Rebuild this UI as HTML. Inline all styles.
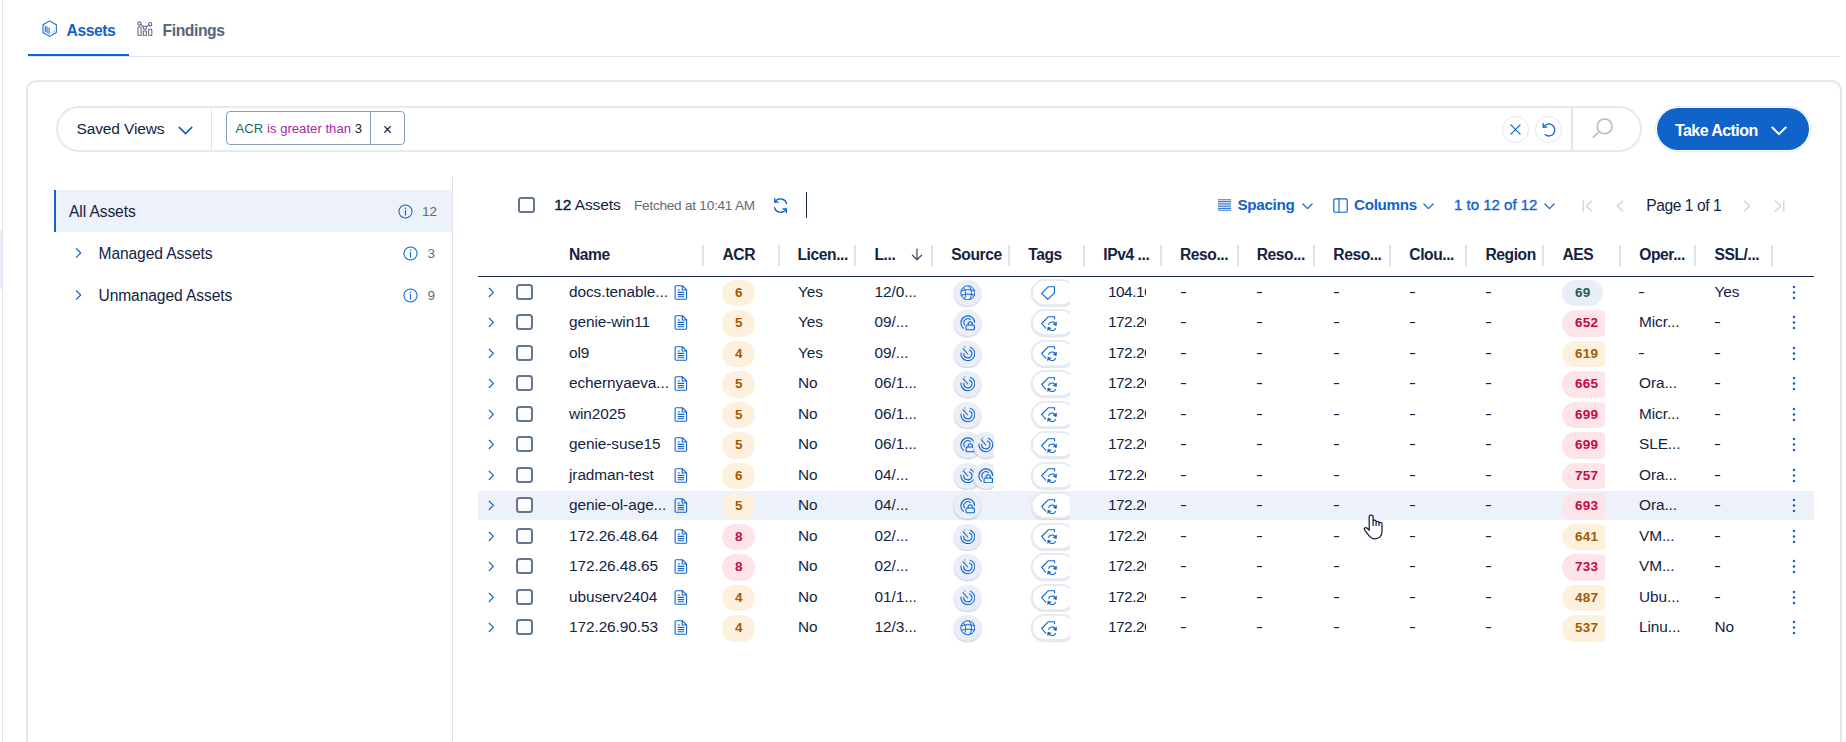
<!DOCTYPE html>
<html lang="en"><head><meta charset="utf-8"><title>Assets</title>
<style>
*{box-sizing:border-box;margin:0;padding:0}
html,body{width:1846px;height:742px;overflow:hidden;background:#fff}
body{font-family:"Liberation Sans",sans-serif;color:#14233f;font-size:15.2px;position:relative}
.abs{position:absolute}
svg{display:block}
.leftline{position:absolute;left:2px;top:0;width:1px;height:742px;background:#dfe4ec}
.leftblock{position:absolute;left:0;top:230px;width:2px;height:59px;background:#e9eef7}
.tabs{position:absolute;left:28px;top:0;width:1812px;height:57px;border-bottom:1.5px solid #dfe5ee}
.tab{position:absolute;top:0;height:56px;font-weight:700;font-size:15.7px;line-height:20px}
.tab .t{position:absolute;top:20.8px;white-space:nowrap}
.tabline{position:absolute;left:28px;top:53.8px;width:101px;height:2.3px;background:#1063c9}
.card{position:absolute;left:26px;top:80px;width:1816px;height:700px;border:2px solid #e3e8ef;border-radius:10.5px;background:#fff}
.fbar{position:absolute;left:55.6px;top:106px;width:1586px;height:46px;border:2px solid #e5e9f0;border-radius:23px;background:#fff}
.fdiv1{position:absolute;left:210.5px;top:108px;width:1.5px;height:42px;background:#dfe5ee}
.fdiv2{position:absolute;left:1571px;top:108px;width:1.5px;height:42px;background:#dfe5ee}
.saved{position:absolute;left:76.5px;top:119px;font-size:15.5px;line-height:19px;white-space:nowrap;letter-spacing:-.12px}
.chip{position:absolute;left:226px;top:111px;width:179px;height:33.7px;border:1.3px solid #8a9fbe;border-radius:4px;background:#fff}
.chip .txt{position:absolute;left:8.6px;top:8.6px;font-size:13.1px;line-height:16px;white-space:nowrap;letter-spacing:.02px}
.chip .dv{position:absolute;left:143px;top:0;width:1px;height:100%;background:#8a9fbe}
.chip .x{position:absolute;left:155.8px;top:8.8px;font-size:16px;line-height:18px;color:#14233f}
.cbtn{position:absolute;width:26.4px;height:26.4px;border-radius:50%;border:1px solid #e3e8ef;background:#fff}
.take{position:absolute;left:1657px;top:108px;width:152px;height:42px;border-radius:21px;background:#1063c9;color:#fff;font-weight:700;font-size:16px;box-shadow:0 0 0 1px #fff,0 0 0 2px #e6ebf4}
.take .t{position:absolute;left:18px;top:12.7px;line-height:19px;white-space:nowrap;letter-spacing:-0.57px}
.vdiv{position:absolute;left:452px;top:176px;width:1px;height:566px;background:#dfe4ec}
.sel{position:absolute;left:54px;top:190px;width:398px;height:42px;background:#edf1f9;border-left:2.5px solid #1063c9}
.li{position:absolute;white-space:nowrap;line-height:19px;font-size:15.6px;letter-spacing:-.1px}
.cnt{position:absolute;font-size:13.5px;color:#5b6b80;line-height:16px}
.inf{position:absolute;width:15px;height:15px}
.tb{position:absolute;white-space:nowrap;line-height:19px}
.bl{color:#1063c9}
.cbx{position:absolute;width:17px;height:16px;border:2px solid #63768f;border-radius:3px;background:#fff}
.table{position:absolute;left:478px;top:0;width:1336px}
.hline{position:absolute;left:0;top:275.5px;width:1336px;height:1.6px;background:#1c2b4a}
.th{position:absolute;top:245px;font-weight:700;font-size:15.6px;line-height:19px;white-space:nowrap;color:#14233f;letter-spacing:-.42px}
.sep{position:absolute;top:245.2px;width:2px;height:20.7px;background:#dde3ec}
.row{position:absolute;left:0;width:1336px;height:30.5px}
.row.hl::before{content:'';position:absolute;left:0;top:.9px;width:100%;height:28.6px;background:#edf1f9}
.row .chv{position:absolute;left:9.7px;top:10.2px;width:6.6px;height:10.8px}
.row .cb{position:absolute;left:38px;top:7px;width:17px;height:16px;border:2px solid #63768f;border-radius:3.5px;background:#fcfdff}
.c{position:absolute;top:5px;line-height:19px;white-space:nowrap;font-size:15.4px;letter-spacing:-.08px}
.nm{left:91px}
.d{transform:scaleX(1.35);transform-origin:0 50%;margin-left:-.7px}
.row .doc{position:absolute;left:195.6px;top:8.2px;width:14px;height:15px}
.bdg{position:absolute;top:2.9px;height:26.4px;border-radius:13.2px;text-align:center;font-weight:700;font-size:13.5px;letter-spacing:.2px;line-height:26.2px}
.bdg.o{background:#fdf1dd;color:#a35a08}
.bdg.r{background:#fde4e8;color:#c40a47}
.bdg.b{background:#e9eef7;color:#1d5c58}
.srcw{position:absolute;left:0;top:0;width:515.7px;height:100%;overflow:hidden}
.src{position:absolute;top:3.2px;width:26.6px;height:25.6px;border-radius:50%;background:#e9eef7;box-shadow:0 1px 2px rgba(60,80,120,.32)}
.src svg{position:absolute;left:5.6px;top:4.8px;width:15.6px;height:15.6px}
.tagw{position:absolute;left:552px;top:0;width:40px;height:100%;overflow:hidden}
.tagp{position:absolute;left:.6px;top:2px;width:44.4px;height:27.2px;border-radius:13.6px;border:2px solid #e6eaf1;background:#fff;box-shadow:0 1px 1.5px rgba(60,80,120,.18)}
.tagp svg{position:absolute;left:8.8px;top:4.5px;width:16.4px;height:15.2px}
.tagp svg.t1{left:8.8px;top:5.5px;width:14.2px;height:14.2px}
.ip{left:630px;width:38px;overflow:hidden;letter-spacing:-.5px}
.aesw{position:absolute;left:1084px;top:0;width:43.3px;height:100%;overflow:hidden}
.aes{left:0.3px;min-width:40.5px;padding:0 12.7px;text-align:left}
.row .keb{position:absolute;left:1314px;top:8px;width:4px;height:15px}
</style></head><body>
<div class="leftline"></div><div class="leftblock"></div>
<div class="tabs"></div><div class="tabline"></div>
<div class="tab" style="left:28px;color:#1063c9">
 <svg class="abs" style="left:13.6px;top:19.6px" width="15.3" height="17.3" viewBox="0 0 16 17.6" preserveAspectRatio="none"><g fill="none" stroke="#1063c9" stroke-width="1.05" stroke-linejoin="round" stroke-linecap="round"><path d="M8 .9 L15 4.9 V12.7 L8 16.7 L1 12.7 V4.9 Z"/><path d="M3.4 6.2 V11.6 M5.3 6.8 V12.8 M7.4 7.8 V14"/><path d="M10.6 12.6 L13.4 11" stroke-width=".8" opacity=".6"/></g></svg>
 <span class="t" style="left:38.6px;letter-spacing:-.45px">Assets</span></div>
<div class="tab" style="left:129px;color:#55657c">
 <svg class="abs" style="left:8.4px;top:20.8px" width="15.8" height="15.6" viewBox="0 0 16 16"><g fill="none" stroke="#55657c" stroke-width="1.05"><circle cx="2.5" cy="2.6" r="1.7"/><circle cx="7.9" cy="6.8" r="1.7"/><circle cx="13.4" cy="3.3" r="1.7"/><rect x=".9" y="6.2" width="3.2" height="8.9" rx=".7"/><rect x="6.3" y="10.2" width="3.2" height="4.9" rx=".7"/><rect x="11.9" y="8.4" width="3.2" height="6.7" rx=".7"/><path d="M3.9 3.7 L6.5 5.8 M9.4 5.9 L12 4.2"/></g></svg>
 <span class="t" style="left:33.6px;letter-spacing:-.42px">Findings</span></div>

<div class="card"></div>
<div class="fbar"></div><div class="fdiv1"></div><div class="fdiv2"></div>
<div class="saved">Saved Views</div>
<div class="abs" style="left:178px;top:125.5px"><svg class="chd" width="15" height="9.0" viewBox="0 0 12 7"><path d="M1 1 L6 6 L11 1" fill="none" stroke="#1063c9" stroke-width="1.3" stroke-linecap="round" stroke-linejoin="round"/></svg></div>
<div class="chip"><span class="txt"><span style="color:#1b6a52">ACR</span> <span style="color:#a02aa4">is greater than</span> <span style="color:#14233f">3</span></span><span class="dv"></span><span class="x">×</span></div>
<div class="cbtn" style="left:1502.4px;top:116.3px"><svg class="abs" style="left:6.6px;top:6.6px" width="11" height="11" viewBox="0 0 12 12"><path d="M1 1 L11 11 M11 1 L1 11" stroke="#1063c9" stroke-width="1.3" stroke-linecap="round"/></svg></div>
<div class="cbtn" style="left:1535.2px;top:116.3px"><svg class="abs" style="left:4.5px;top:4.6px" width="16" height="16" viewBox="0 0 16 16"><g fill="none" stroke="#1063c9" stroke-width="1.3" stroke-linecap="round" stroke-linejoin="round"><path d="M2.6 5 A6 6 0 1 1 4 12.6"/><path d="M2.2 1.6 V5.2 H5.8"/></g></svg></div>
<svg class="abs" style="left:1590.6px;top:117.4px" width="24" height="22" viewBox="0 0 24 22"><g fill="none" stroke="#b3bcca" stroke-width="1.55" stroke-linecap="round"><circle cx="13.6" cy="9.4" r="7.4"/><path d="M8.2 14.8 L2.2 20.4"/></g></svg>
<div class="take"><span class="t">Take Action</span><span class="abs" style="left:113.8px;top:18px"><svg class="chd" width="16" height="9.6" viewBox="0 0 12 7"><path d="M1 1 L6 6 L11 1" fill="none" stroke="#fff" stroke-width="1.5" stroke-linecap="round" stroke-linejoin="round"/></svg></span></div>

<div class="vdiv"></div>
<div class="sel"></div>
<div class="li" style="left:69px;top:201.5px">All Assets</div>
<div class="li" style="left:98.5px;top:243.5px">Managed Assets</div>
<div class="li" style="left:98.5px;top:285.5px">Unmanaged Assets</div>
<svg class="abs" style="left:75px;top:247px" width="7" height="12" viewBox="0 0 8 12"><path d="M1.5 1 L6.5 6 L1.5 11" fill="none" stroke="#1063c9" stroke-width="1.3" stroke-linecap="round" stroke-linejoin="round"/></svg>
<svg class="abs" style="left:75px;top:289px" width="7" height="12" viewBox="0 0 8 12"><path d="M1.5 1 L6.5 6 L1.5 11" fill="none" stroke="#1063c9" stroke-width="1.3" stroke-linecap="round" stroke-linejoin="round"/></svg>
<div style="position:absolute;left:398px;top:203.5px"><svg class="inf" viewBox="0 0 16 16"><circle cx="8" cy="8" r="7" fill="none" stroke="#1063c9" stroke-width="1.1"/><path d="M8 7 V11.6" stroke="#1063c9" stroke-width="1.2" stroke-linecap="round"/><circle cx="8" cy="4.6" r="0.8" fill="#1063c9"/></svg></div><div class="cnt" style="left:422px;top:203.5px">12</div>
<div style="position:absolute;left:403px;top:245.5px"><svg class="inf" viewBox="0 0 16 16"><circle cx="8" cy="8" r="7" fill="none" stroke="#1063c9" stroke-width="1.1"/><path d="M8 7 V11.6" stroke="#1063c9" stroke-width="1.2" stroke-linecap="round"/><circle cx="8" cy="4.6" r="0.8" fill="#1063c9"/></svg></div><div class="cnt" style="left:427.5px;top:245.5px">3</div>
<div style="position:absolute;left:403px;top:287.5px"><svg class="inf" viewBox="0 0 16 16"><circle cx="8" cy="8" r="7" fill="none" stroke="#1063c9" stroke-width="1.1"/><path d="M8 7 V11.6" stroke="#1063c9" stroke-width="1.2" stroke-linecap="round"/><circle cx="8" cy="4.6" r="0.8" fill="#1063c9"/></svg></div><div class="cnt" style="left:427.5px;top:287.5px">9</div>

<div class="cbx" style="left:518px;top:196.5px"></div>
<div class="tb" style="left:554.3px;top:195.4px;font-size:15.5px;letter-spacing:-.1px"><span style="-webkit-text-stroke:.45px #14233f">12</span> Assets</div>
<div class="tb" style="left:634px;top:195.6px;font-size:13.6px;letter-spacing:-.24px;color:#5b6b80">Fetched at 10:41 AM</div>
<svg class="abs" style="left:772px;top:196.6px" width="17.2" height="17.2" viewBox="0 0 16 16"><g fill="none" stroke="#1063c9" stroke-width="1.25" stroke-linecap="round" stroke-linejoin="round"><path d="M13.6 6 A6 6 0 0 0 2.8 4.6"/><path d="M2.4 10 A6 6 0 0 0 13.2 11.4"/><path d="M2.6 1.6 V4.8 H5.8"/><path d="M13.4 14.4 V11.2 H10.2"/></g></svg>
<div class="abs" style="left:806px;top:192px;width:1.3px;height:26px;background:#14233f"></div>

<svg class="abs" style="left:1218px;top:198.5px" width="13" height="12.2" viewBox="0 0 13 13" preserveAspectRatio="none"><g stroke="#1063c9" stroke-width="1.1" opacity=".85"><path d="M0 .7H13M0 2.6H13M0 4.5H13M0 6.4H13M0 8.3H13M0 10.2H13M0 12.1H13"/></g></svg>
<div class="tb bl" style="left:1237.5px;top:195px;font-weight:700;font-size:15.2px;letter-spacing:-.3px">Spacing</div>
<div class="abs" style="left:1302px;top:202.5px"><svg class="chd" width="11" height="6.6" viewBox="0 0 12 7"><path d="M1 1 L6 6 L11 1" fill="none" stroke="#1063c9" stroke-width="1.3" stroke-linecap="round" stroke-linejoin="round"/></svg></div>
<svg class="abs" style="left:1333px;top:198px" width="15" height="15" viewBox="0 0 15 15"><g fill="none" stroke="#1063c9" stroke-width="1.15"><rect x=".8" y=".8" width="13.4" height="13.4" rx="1.3"/><path d="M6 .8 V14.2"/></g></svg>
<div class="tb bl" style="left:1354px;top:195px;font-weight:700;font-size:15.2px;letter-spacing:-.3px">Columns</div>
<div class="abs" style="left:1423px;top:202.5px"><svg class="chd" width="11" height="6.6" viewBox="0 0 12 7"><path d="M1 1 L6 6 L11 1" fill="none" stroke="#1063c9" stroke-width="1.3" stroke-linecap="round" stroke-linejoin="round"/></svg></div>
<div class="tb bl" style="left:1454px;top:195px;font-size:15px;-webkit-text-stroke:.35px #1063c9">1 to 12 of 12</div>
<div class="abs" style="left:1544px;top:203px"><svg class="chd" width="11" height="6.6" viewBox="0 0 12 7"><path d="M1 1 L6 6 L11 1" fill="none" stroke="#1063c9" stroke-width="1.3" stroke-linecap="round" stroke-linejoin="round"/></svg></div>
<svg class="abs" style="left:1582.4px;top:199.6px" width="11" height="12" viewBox="0 0 11 12"><path d="M1.2 .8 V11.2 M9.6 1 L4.4 6 L9.6 11" fill="none" stroke="#cbd2dd" stroke-width="1.3" stroke-linecap="round" stroke-linejoin="round"/></svg>
<svg class="abs" style="left:1615.6px;top:199.6px" width="8" height="12" viewBox="0 0 8 12"><path d="M6.6 1 L1.4 6 L6.6 11" fill="none" stroke="#cbd2dd" stroke-width="1.3" stroke-linecap="round" stroke-linejoin="round"/></svg>
<div class="tb" style="left:1646.2px;top:195.7px;font-size:15.6px;letter-spacing:-.42px">Page 1 of 1</div>
<svg class="abs" style="left:1743px;top:199.6px" width="8" height="12" viewBox="0 0 8 12"><path d="M1.4 1 L6.6 6 L1.4 11" fill="none" stroke="#cbd2dd" stroke-width="1.3" stroke-linecap="round" stroke-linejoin="round"/></svg>
<svg class="abs" style="left:1774.4px;top:199.6px" width="11" height="12" viewBox="0 0 11 12"><path d="M9.8 .8 V11.2 M1.4 1 L6.6 6 L1.4 11" fill="none" stroke="#cbd2dd" stroke-width="1.3" stroke-linecap="round" stroke-linejoin="round"/></svg>

<div class="table">
<span class="th" style="left:91.0px">Name</span><span class="th" style="left:244.5px">ACR</span><span class="th" style="left:319.5px">Licen...</span><span class="th" style="left:396.5px">L...</span><span class="th" style="left:473.3px">Source</span><span class="th" style="left:550.3px">Tags</span><span class="th" style="left:625.3px">IPv4 ...</span><span class="th" style="left:702.0px">Reso...</span><span class="th" style="left:778.7px">Reso...</span><span class="th" style="left:855.3px">Reso...</span><span class="th" style="left:931.3px">Clou...</span><span class="th" style="left:1007.5px">Region</span><span class="th" style="left:1084.5px">AES</span><span class="th" style="left:1161.3px">Oper...</span><span class="th" style="left:1236.5px">SSL/...</span><span class="sep" style="left:224.0px"></span><span class="sep" style="left:300.0px"></span><span class="sep" style="left:376.0px"></span><span class="sep" style="left:453.0px"></span><span class="sep" style="left:530.0px"></span><span class="sep" style="left:605.0px"></span><span class="sep" style="left:682.0px"></span><span class="sep" style="left:758.5px"></span><span class="sep" style="left:835.0px"></span><span class="sep" style="left:911.0px"></span><span class="sep" style="left:987.0px"></span><span class="sep" style="left:1064.0px"></span><span class="sep" style="left:1141.0px"></span><span class="sep" style="left:1216.0px"></span><span class="sep" style="left:1293.0px"></span>
<svg class="abs" style="left:432.6px;top:247.8px" width="12" height="13" viewBox="0 0 12 13"><path d="M6 1 V11.6 M1.4 7.2 L6 11.8 L10.6 7.2" fill="none" stroke="#3f4f69" stroke-width="1.25" stroke-linecap="round" stroke-linejoin="round"/></svg>
<div class="hline"></div>
<div class="row" style="top:276.80px">
<svg class="chv" viewBox="0 0 8 12"><path d="M1.5 1 L6.5 6 L1.5 11" fill="none" stroke="#1063c9" stroke-width="1.4" stroke-linecap="round" stroke-linejoin="round"/></svg><span class="cb"></span><span class="c nm">docs.tenable...</span><svg class="doc" viewBox="0 0 14 15"><path d="M2.2 .7 H8.4 L12.6 4.9 V13.2 a1.1 1.1 0 0 1 -1.1 1.1 H2.2 a1.1 1.1 0 0 1 -1.1 -1.1 V1.8 a1.1 1.1 0 0 1 1.1 -1.1 Z M8.2 .9 V5 H12.4 M3.6 7.4 H10.2 M3.6 9.6 H10.2 M3.6 11.8 H10.2 M3.6 5 H5.8" fill="none" stroke="#1063c9" stroke-width="1.1" stroke-linejoin="round"/></svg>
<span class="bdg o" style="left:244.3px;width:33px">6</span>
<span class="c" style="left:320px">Yes</span><span class="c" style="left:396.6px">12/0...</span>
<span class="srcw"><span class="src" style="left:476.3px"><svg viewBox="0 0 16 16"><g fill="none" stroke="#1063c9" stroke-width="1.0"><circle cx="8" cy="8" r="7.2"/><path d="M3.4 2.6 C6.2 6 6.4 10.2 4.6 14.2 M9.2 1 C12.4 4.8 12.6 10.6 10 15 M1 6.2 C5.4 4.2 11 4.4 14.8 6 M1.2 10.8 C5.6 8.8 11 9 15 10.6"/></g></svg></span></span>
<span class="tagw"><span class="tagp"><svg class="t1" viewBox="0 0 14 14"><path d="M7.1 .8 L13.3 .7 V6.7 L6.7 13.2 L.7 7.2 Z" fill="none" stroke="#1063c9" stroke-width="1.1" stroke-linejoin="round"/></svg></span></span>
<span class="c ip">104.16</span>
<span class="c d" style="left:702.5px">-</span><span class="c d" style="left:779px">-</span><span class="c d" style="left:855.5px">-</span><span class="c d" style="left:931.5px">-</span><span class="c d" style="left:1008px">-</span>
<span class="aesw"><span class="bdg b aes">69</span></span>
<span class="c d" style="left:1161px">-</span><span class="c" style="left:1236.5px">Yes</span><svg class="keb" viewBox="0 0 4 16"><g fill="#1063c9"><circle cx="2" cy="2.2" r="1.35"/><circle cx="2" cy="8" r="1.35"/><circle cx="2" cy="13.8" r="1.35"/></g></svg>
</div>
<div class="row" style="top:307.30px">
<svg class="chv" viewBox="0 0 8 12"><path d="M1.5 1 L6.5 6 L1.5 11" fill="none" stroke="#1063c9" stroke-width="1.4" stroke-linecap="round" stroke-linejoin="round"/></svg><span class="cb"></span><span class="c nm">genie-win11</span><svg class="doc" viewBox="0 0 14 15"><path d="M2.2 .7 H8.4 L12.6 4.9 V13.2 a1.1 1.1 0 0 1 -1.1 1.1 H2.2 a1.1 1.1 0 0 1 -1.1 -1.1 V1.8 a1.1 1.1 0 0 1 1.1 -1.1 Z M8.2 .9 V5 H12.4 M3.6 7.4 H10.2 M3.6 9.6 H10.2 M3.6 11.8 H10.2 M3.6 5 H5.8" fill="none" stroke="#1063c9" stroke-width="1.1" stroke-linejoin="round"/></svg>
<span class="bdg o" style="left:244.3px;width:33px">5</span>
<span class="c" style="left:320px">Yes</span><span class="c" style="left:396.6px">09/...</span>
<span class="srcw"><span class="src" style="left:476.3px"><svg viewBox="0 0 16 16"><g fill="none" stroke="#1063c9" stroke-width="1.1" stroke-linecap="round" stroke-linejoin="round"><path d="M3.6 13.6 A7.1 7.1 0 1 1 15.1 7.6"/><path d="M4.6 10 A4.1 4.1 0 0 1 10.6 4.6"/><rect x="6.2" y="10.2" width="8.6" height="5" rx="1"/><path d="M8.3 10.2 V9.2 A2.2 2.2 0 0 1 12.7 9.2 V10.2"/></g></svg></span></span>
<span class="tagw"><span class="tagp"><svg viewBox="0 0 16.4 15.2"><g fill="none" stroke="#1063c9" stroke-width="1.1" stroke-linecap="round" stroke-linejoin="round"><path d="M4.7 12.2 L.7 7.5 L7.2 .8 H13.6 V2.8"/><path d="M15 9 A4 4 0 0 0 7.6 8.2"/><path d="M7.2 11.6 A4 4 0 0 0 14.6 12.4"/><path d="M15.6 6.4 L15.2 9.4 L12.4 8.6 Z M6.6 14.2 L7 11.2 L9.8 12 Z" fill="#1063c9" stroke-width=".6"/></g></svg></span></span>
<span class="c ip">172.26</span>
<span class="c d" style="left:702.5px">-</span><span class="c d" style="left:779px">-</span><span class="c d" style="left:855.5px">-</span><span class="c d" style="left:931.5px">-</span><span class="c d" style="left:1008px">-</span>
<span class="aesw"><span class="bdg r aes">652</span></span>
<span class="c" style="left:1161px">Micr...</span><span class="c d" style="left:1236.5px">-</span><svg class="keb" viewBox="0 0 4 16"><g fill="#1063c9"><circle cx="2" cy="2.2" r="1.35"/><circle cx="2" cy="8" r="1.35"/><circle cx="2" cy="13.8" r="1.35"/></g></svg>
</div>
<div class="row" style="top:337.80px">
<svg class="chv" viewBox="0 0 8 12"><path d="M1.5 1 L6.5 6 L1.5 11" fill="none" stroke="#1063c9" stroke-width="1.4" stroke-linecap="round" stroke-linejoin="round"/></svg><span class="cb"></span><span class="c nm">ol9</span><svg class="doc" viewBox="0 0 14 15"><path d="M2.2 .7 H8.4 L12.6 4.9 V13.2 a1.1 1.1 0 0 1 -1.1 1.1 H2.2 a1.1 1.1 0 0 1 -1.1 -1.1 V1.8 a1.1 1.1 0 0 1 1.1 -1.1 Z M8.2 .9 V5 H12.4 M3.6 7.4 H10.2 M3.6 9.6 H10.2 M3.6 11.8 H10.2 M3.6 5 H5.8" fill="none" stroke="#1063c9" stroke-width="1.1" stroke-linejoin="round"/></svg>
<span class="bdg o" style="left:244.3px;width:33px">4</span>
<span class="c" style="left:320px">Yes</span><span class="c" style="left:396.6px">09/...</span>
<span class="srcw"><span class="src" style="left:476.3px"><svg viewBox="0 0 16 16"><g fill="none" stroke="#1063c9" stroke-width="1.1" stroke-linecap="round"><path d="M10.6 1.3 A7.1 7.1 0 1 1 1 7.2"/><path d="M9.6 4 A4.2 4.2 0 1 1 3.9 7.4"/><path d="M8 8.2 L3.2 2.8"/><circle cx="4.9" cy="0.9" r=".55" fill="#1063c9" stroke="none"/></g></svg></span></span>
<span class="tagw"><span class="tagp"><svg viewBox="0 0 16.4 15.2"><g fill="none" stroke="#1063c9" stroke-width="1.1" stroke-linecap="round" stroke-linejoin="round"><path d="M4.7 12.2 L.7 7.5 L7.2 .8 H13.6 V2.8"/><path d="M15 9 A4 4 0 0 0 7.6 8.2"/><path d="M7.2 11.6 A4 4 0 0 0 14.6 12.4"/><path d="M15.6 6.4 L15.2 9.4 L12.4 8.6 Z M6.6 14.2 L7 11.2 L9.8 12 Z" fill="#1063c9" stroke-width=".6"/></g></svg></span></span>
<span class="c ip">172.26</span>
<span class="c d" style="left:702.5px">-</span><span class="c d" style="left:779px">-</span><span class="c d" style="left:855.5px">-</span><span class="c d" style="left:931.5px">-</span><span class="c d" style="left:1008px">-</span>
<span class="aesw"><span class="bdg o aes">619</span></span>
<span class="c d" style="left:1161px">-</span><span class="c d" style="left:1236.5px">-</span><svg class="keb" viewBox="0 0 4 16"><g fill="#1063c9"><circle cx="2" cy="2.2" r="1.35"/><circle cx="2" cy="8" r="1.35"/><circle cx="2" cy="13.8" r="1.35"/></g></svg>
</div>
<div class="row" style="top:368.30px">
<svg class="chv" viewBox="0 0 8 12"><path d="M1.5 1 L6.5 6 L1.5 11" fill="none" stroke="#1063c9" stroke-width="1.4" stroke-linecap="round" stroke-linejoin="round"/></svg><span class="cb"></span><span class="c nm">echernyaeva...</span><svg class="doc" viewBox="0 0 14 15"><path d="M2.2 .7 H8.4 L12.6 4.9 V13.2 a1.1 1.1 0 0 1 -1.1 1.1 H2.2 a1.1 1.1 0 0 1 -1.1 -1.1 V1.8 a1.1 1.1 0 0 1 1.1 -1.1 Z M8.2 .9 V5 H12.4 M3.6 7.4 H10.2 M3.6 9.6 H10.2 M3.6 11.8 H10.2 M3.6 5 H5.8" fill="none" stroke="#1063c9" stroke-width="1.1" stroke-linejoin="round"/></svg>
<span class="bdg o" style="left:244.3px;width:33px">5</span>
<span class="c" style="left:320px">No</span><span class="c" style="left:396.6px">06/1...</span>
<span class="srcw"><span class="src" style="left:476.3px"><svg viewBox="0 0 16 16"><g fill="none" stroke="#1063c9" stroke-width="1.1" stroke-linecap="round"><path d="M10.6 1.3 A7.1 7.1 0 1 1 1 7.2"/><path d="M9.6 4 A4.2 4.2 0 1 1 3.9 7.4"/><path d="M8 8.2 L3.2 2.8"/><circle cx="4.9" cy="0.9" r=".55" fill="#1063c9" stroke="none"/></g></svg></span></span>
<span class="tagw"><span class="tagp"><svg viewBox="0 0 16.4 15.2"><g fill="none" stroke="#1063c9" stroke-width="1.1" stroke-linecap="round" stroke-linejoin="round"><path d="M4.7 12.2 L.7 7.5 L7.2 .8 H13.6 V2.8"/><path d="M15 9 A4 4 0 0 0 7.6 8.2"/><path d="M7.2 11.6 A4 4 0 0 0 14.6 12.4"/><path d="M15.6 6.4 L15.2 9.4 L12.4 8.6 Z M6.6 14.2 L7 11.2 L9.8 12 Z" fill="#1063c9" stroke-width=".6"/></g></svg></span></span>
<span class="c ip">172.26</span>
<span class="c d" style="left:702.5px">-</span><span class="c d" style="left:779px">-</span><span class="c d" style="left:855.5px">-</span><span class="c d" style="left:931.5px">-</span><span class="c d" style="left:1008px">-</span>
<span class="aesw"><span class="bdg r aes">665</span></span>
<span class="c" style="left:1161px">Ora...</span><span class="c d" style="left:1236.5px">-</span><svg class="keb" viewBox="0 0 4 16"><g fill="#1063c9"><circle cx="2" cy="2.2" r="1.35"/><circle cx="2" cy="8" r="1.35"/><circle cx="2" cy="13.8" r="1.35"/></g></svg>
</div>
<div class="row" style="top:398.80px">
<svg class="chv" viewBox="0 0 8 12"><path d="M1.5 1 L6.5 6 L1.5 11" fill="none" stroke="#1063c9" stroke-width="1.4" stroke-linecap="round" stroke-linejoin="round"/></svg><span class="cb"></span><span class="c nm">win2025</span><svg class="doc" viewBox="0 0 14 15"><path d="M2.2 .7 H8.4 L12.6 4.9 V13.2 a1.1 1.1 0 0 1 -1.1 1.1 H2.2 a1.1 1.1 0 0 1 -1.1 -1.1 V1.8 a1.1 1.1 0 0 1 1.1 -1.1 Z M8.2 .9 V5 H12.4 M3.6 7.4 H10.2 M3.6 9.6 H10.2 M3.6 11.8 H10.2 M3.6 5 H5.8" fill="none" stroke="#1063c9" stroke-width="1.1" stroke-linejoin="round"/></svg>
<span class="bdg o" style="left:244.3px;width:33px">5</span>
<span class="c" style="left:320px">No</span><span class="c" style="left:396.6px">06/1...</span>
<span class="srcw"><span class="src" style="left:476.3px"><svg viewBox="0 0 16 16"><g fill="none" stroke="#1063c9" stroke-width="1.1" stroke-linecap="round"><path d="M10.6 1.3 A7.1 7.1 0 1 1 1 7.2"/><path d="M9.6 4 A4.2 4.2 0 1 1 3.9 7.4"/><path d="M8 8.2 L3.2 2.8"/><circle cx="4.9" cy="0.9" r=".55" fill="#1063c9" stroke="none"/></g></svg></span></span>
<span class="tagw"><span class="tagp"><svg viewBox="0 0 16.4 15.2"><g fill="none" stroke="#1063c9" stroke-width="1.1" stroke-linecap="round" stroke-linejoin="round"><path d="M4.7 12.2 L.7 7.5 L7.2 .8 H13.6 V2.8"/><path d="M15 9 A4 4 0 0 0 7.6 8.2"/><path d="M7.2 11.6 A4 4 0 0 0 14.6 12.4"/><path d="M15.6 6.4 L15.2 9.4 L12.4 8.6 Z M6.6 14.2 L7 11.2 L9.8 12 Z" fill="#1063c9" stroke-width=".6"/></g></svg></span></span>
<span class="c ip">172.26</span>
<span class="c d" style="left:702.5px">-</span><span class="c d" style="left:779px">-</span><span class="c d" style="left:855.5px">-</span><span class="c d" style="left:931.5px">-</span><span class="c d" style="left:1008px">-</span>
<span class="aesw"><span class="bdg r aes">699</span></span>
<span class="c" style="left:1161px">Micr...</span><span class="c d" style="left:1236.5px">-</span><svg class="keb" viewBox="0 0 4 16"><g fill="#1063c9"><circle cx="2" cy="2.2" r="1.35"/><circle cx="2" cy="8" r="1.35"/><circle cx="2" cy="13.8" r="1.35"/></g></svg>
</div>
<div class="row" style="top:429.30px">
<svg class="chv" viewBox="0 0 8 12"><path d="M1.5 1 L6.5 6 L1.5 11" fill="none" stroke="#1063c9" stroke-width="1.4" stroke-linecap="round" stroke-linejoin="round"/></svg><span class="cb"></span><span class="c nm">genie-suse15</span><svg class="doc" viewBox="0 0 14 15"><path d="M2.2 .7 H8.4 L12.6 4.9 V13.2 a1.1 1.1 0 0 1 -1.1 1.1 H2.2 a1.1 1.1 0 0 1 -1.1 -1.1 V1.8 a1.1 1.1 0 0 1 1.1 -1.1 Z M8.2 .9 V5 H12.4 M3.6 7.4 H10.2 M3.6 9.6 H10.2 M3.6 11.8 H10.2 M3.6 5 H5.8" fill="none" stroke="#1063c9" stroke-width="1.1" stroke-linejoin="round"/></svg>
<span class="bdg o" style="left:244.3px;width:33px">5</span>
<span class="c" style="left:320px">No</span><span class="c" style="left:396.6px">06/1...</span>
<span class="srcw"><span class="src" style="left:476.3px"><svg viewBox="0 0 16 16"><g fill="none" stroke="#1063c9" stroke-width="1.1" stroke-linecap="round" stroke-linejoin="round"><path d="M3.6 13.6 A7.1 7.1 0 1 1 15.1 7.6"/><path d="M4.6 10 A4.1 4.1 0 0 1 10.6 4.6"/><rect x="6.2" y="10.2" width="8.6" height="5" rx="1"/><path d="M8.3 10.2 V9.2 A2.2 2.2 0 0 1 12.7 9.2 V10.2"/></g></svg></span><span class="src" style="left:494.8px"><svg viewBox="0 0 16 16"><g fill="none" stroke="#1063c9" stroke-width="1.1" stroke-linecap="round"><path d="M10.6 1.3 A7.1 7.1 0 1 1 1 7.2"/><path d="M9.6 4 A4.2 4.2 0 1 1 3.9 7.4"/><path d="M8 8.2 L3.2 2.8"/><circle cx="4.9" cy="0.9" r=".55" fill="#1063c9" stroke="none"/></g></svg></span></span>
<span class="tagw"><span class="tagp"><svg viewBox="0 0 16.4 15.2"><g fill="none" stroke="#1063c9" stroke-width="1.1" stroke-linecap="round" stroke-linejoin="round"><path d="M4.7 12.2 L.7 7.5 L7.2 .8 H13.6 V2.8"/><path d="M15 9 A4 4 0 0 0 7.6 8.2"/><path d="M7.2 11.6 A4 4 0 0 0 14.6 12.4"/><path d="M15.6 6.4 L15.2 9.4 L12.4 8.6 Z M6.6 14.2 L7 11.2 L9.8 12 Z" fill="#1063c9" stroke-width=".6"/></g></svg></span></span>
<span class="c ip">172.26</span>
<span class="c d" style="left:702.5px">-</span><span class="c d" style="left:779px">-</span><span class="c d" style="left:855.5px">-</span><span class="c d" style="left:931.5px">-</span><span class="c d" style="left:1008px">-</span>
<span class="aesw"><span class="bdg r aes">699</span></span>
<span class="c" style="left:1161px">SLE...</span><span class="c d" style="left:1236.5px">-</span><svg class="keb" viewBox="0 0 4 16"><g fill="#1063c9"><circle cx="2" cy="2.2" r="1.35"/><circle cx="2" cy="8" r="1.35"/><circle cx="2" cy="13.8" r="1.35"/></g></svg>
</div>
<div class="row" style="top:459.80px">
<svg class="chv" viewBox="0 0 8 12"><path d="M1.5 1 L6.5 6 L1.5 11" fill="none" stroke="#1063c9" stroke-width="1.4" stroke-linecap="round" stroke-linejoin="round"/></svg><span class="cb"></span><span class="c nm">jradman-test</span><svg class="doc" viewBox="0 0 14 15"><path d="M2.2 .7 H8.4 L12.6 4.9 V13.2 a1.1 1.1 0 0 1 -1.1 1.1 H2.2 a1.1 1.1 0 0 1 -1.1 -1.1 V1.8 a1.1 1.1 0 0 1 1.1 -1.1 Z M8.2 .9 V5 H12.4 M3.6 7.4 H10.2 M3.6 9.6 H10.2 M3.6 11.8 H10.2 M3.6 5 H5.8" fill="none" stroke="#1063c9" stroke-width="1.1" stroke-linejoin="round"/></svg>
<span class="bdg o" style="left:244.3px;width:33px">6</span>
<span class="c" style="left:320px">No</span><span class="c" style="left:396.6px">04/...</span>
<span class="srcw"><span class="src" style="left:476.3px"><svg viewBox="0 0 16 16"><g fill="none" stroke="#1063c9" stroke-width="1.1" stroke-linecap="round"><path d="M10.6 1.3 A7.1 7.1 0 1 1 1 7.2"/><path d="M9.6 4 A4.2 4.2 0 1 1 3.9 7.4"/><path d="M8 8.2 L3.2 2.8"/><circle cx="4.9" cy="0.9" r=".55" fill="#1063c9" stroke="none"/></g></svg></span><span class="src" style="left:494.8px"><svg viewBox="0 0 16 16"><g fill="none" stroke="#1063c9" stroke-width="1.1" stroke-linecap="round" stroke-linejoin="round"><path d="M3.6 13.6 A7.1 7.1 0 1 1 15.1 7.6"/><path d="M4.6 10 A4.1 4.1 0 0 1 10.6 4.6"/><rect x="6.2" y="10.2" width="8.6" height="5" rx="1"/><path d="M8.3 10.2 V9.2 A2.2 2.2 0 0 1 12.7 9.2 V10.2"/></g></svg></span></span>
<span class="tagw"><span class="tagp"><svg viewBox="0 0 16.4 15.2"><g fill="none" stroke="#1063c9" stroke-width="1.1" stroke-linecap="round" stroke-linejoin="round"><path d="M4.7 12.2 L.7 7.5 L7.2 .8 H13.6 V2.8"/><path d="M15 9 A4 4 0 0 0 7.6 8.2"/><path d="M7.2 11.6 A4 4 0 0 0 14.6 12.4"/><path d="M15.6 6.4 L15.2 9.4 L12.4 8.6 Z M6.6 14.2 L7 11.2 L9.8 12 Z" fill="#1063c9" stroke-width=".6"/></g></svg></span></span>
<span class="c ip">172.26</span>
<span class="c d" style="left:702.5px">-</span><span class="c d" style="left:779px">-</span><span class="c d" style="left:855.5px">-</span><span class="c d" style="left:931.5px">-</span><span class="c d" style="left:1008px">-</span>
<span class="aesw"><span class="bdg r aes">757</span></span>
<span class="c" style="left:1161px">Ora...</span><span class="c d" style="left:1236.5px">-</span><svg class="keb" viewBox="0 0 4 16"><g fill="#1063c9"><circle cx="2" cy="2.2" r="1.35"/><circle cx="2" cy="8" r="1.35"/><circle cx="2" cy="13.8" r="1.35"/></g></svg>
</div>
<div class="row hl" style="top:490.30px">
<svg class="chv" viewBox="0 0 8 12"><path d="M1.5 1 L6.5 6 L1.5 11" fill="none" stroke="#1063c9" stroke-width="1.4" stroke-linecap="round" stroke-linejoin="round"/></svg><span class="cb"></span><span class="c nm">genie-ol-age...</span><svg class="doc" viewBox="0 0 14 15"><path d="M2.2 .7 H8.4 L12.6 4.9 V13.2 a1.1 1.1 0 0 1 -1.1 1.1 H2.2 a1.1 1.1 0 0 1 -1.1 -1.1 V1.8 a1.1 1.1 0 0 1 1.1 -1.1 Z M8.2 .9 V5 H12.4 M3.6 7.4 H10.2 M3.6 9.6 H10.2 M3.6 11.8 H10.2 M3.6 5 H5.8" fill="none" stroke="#1063c9" stroke-width="1.1" stroke-linejoin="round"/></svg>
<span class="bdg o" style="left:244.3px;width:33px">5</span>
<span class="c" style="left:320px">No</span><span class="c" style="left:396.6px">04/...</span>
<span class="srcw"><span class="src" style="left:476.3px"><svg viewBox="0 0 16 16"><g fill="none" stroke="#1063c9" stroke-width="1.1" stroke-linecap="round" stroke-linejoin="round"><path d="M3.6 13.6 A7.1 7.1 0 1 1 15.1 7.6"/><path d="M4.6 10 A4.1 4.1 0 0 1 10.6 4.6"/><rect x="6.2" y="10.2" width="8.6" height="5" rx="1"/><path d="M8.3 10.2 V9.2 A2.2 2.2 0 0 1 12.7 9.2 V10.2"/></g></svg></span></span>
<span class="tagw"><span class="tagp"><svg viewBox="0 0 16.4 15.2"><g fill="none" stroke="#1063c9" stroke-width="1.1" stroke-linecap="round" stroke-linejoin="round"><path d="M4.7 12.2 L.7 7.5 L7.2 .8 H13.6 V2.8"/><path d="M15 9 A4 4 0 0 0 7.6 8.2"/><path d="M7.2 11.6 A4 4 0 0 0 14.6 12.4"/><path d="M15.6 6.4 L15.2 9.4 L12.4 8.6 Z M6.6 14.2 L7 11.2 L9.8 12 Z" fill="#1063c9" stroke-width=".6"/></g></svg></span></span>
<span class="c ip">172.26</span>
<span class="c d" style="left:702.5px">-</span><span class="c d" style="left:779px">-</span><span class="c d" style="left:855.5px">-</span><span class="c d" style="left:931.5px">-</span><span class="c d" style="left:1008px">-</span>
<span class="aesw"><span class="bdg r aes">693</span></span>
<span class="c" style="left:1161px">Ora...</span><span class="c d" style="left:1236.5px">-</span><svg class="keb" viewBox="0 0 4 16"><g fill="#1063c9"><circle cx="2" cy="2.2" r="1.35"/><circle cx="2" cy="8" r="1.35"/><circle cx="2" cy="13.8" r="1.35"/></g></svg>
</div>
<div class="row" style="top:520.80px">
<svg class="chv" viewBox="0 0 8 12"><path d="M1.5 1 L6.5 6 L1.5 11" fill="none" stroke="#1063c9" stroke-width="1.4" stroke-linecap="round" stroke-linejoin="round"/></svg><span class="cb"></span><span class="c nm">172.26.48.64</span><svg class="doc" viewBox="0 0 14 15"><path d="M2.2 .7 H8.4 L12.6 4.9 V13.2 a1.1 1.1 0 0 1 -1.1 1.1 H2.2 a1.1 1.1 0 0 1 -1.1 -1.1 V1.8 a1.1 1.1 0 0 1 1.1 -1.1 Z M8.2 .9 V5 H12.4 M3.6 7.4 H10.2 M3.6 9.6 H10.2 M3.6 11.8 H10.2 M3.6 5 H5.8" fill="none" stroke="#1063c9" stroke-width="1.1" stroke-linejoin="round"/></svg>
<span class="bdg r" style="left:244.3px;width:33px">8</span>
<span class="c" style="left:320px">No</span><span class="c" style="left:396.6px">02/...</span>
<span class="srcw"><span class="src" style="left:476.3px"><svg viewBox="0 0 16 16"><g fill="none" stroke="#1063c9" stroke-width="1.1" stroke-linecap="round"><path d="M10.6 1.3 A7.1 7.1 0 1 1 1 7.2"/><path d="M9.6 4 A4.2 4.2 0 1 1 3.9 7.4"/><path d="M8 8.2 L3.2 2.8"/><circle cx="4.9" cy="0.9" r=".55" fill="#1063c9" stroke="none"/></g></svg></span></span>
<span class="tagw"><span class="tagp"><svg viewBox="0 0 16.4 15.2"><g fill="none" stroke="#1063c9" stroke-width="1.1" stroke-linecap="round" stroke-linejoin="round"><path d="M4.7 12.2 L.7 7.5 L7.2 .8 H13.6 V2.8"/><path d="M15 9 A4 4 0 0 0 7.6 8.2"/><path d="M7.2 11.6 A4 4 0 0 0 14.6 12.4"/><path d="M15.6 6.4 L15.2 9.4 L12.4 8.6 Z M6.6 14.2 L7 11.2 L9.8 12 Z" fill="#1063c9" stroke-width=".6"/></g></svg></span></span>
<span class="c ip">172.26</span>
<span class="c d" style="left:702.5px">-</span><span class="c d" style="left:779px">-</span><span class="c d" style="left:855.5px">-</span><span class="c d" style="left:931.5px">-</span><span class="c d" style="left:1008px">-</span>
<span class="aesw"><span class="bdg o aes">641</span></span>
<span class="c" style="left:1161px">VM...</span><span class="c d" style="left:1236.5px">-</span><svg class="keb" viewBox="0 0 4 16"><g fill="#1063c9"><circle cx="2" cy="2.2" r="1.35"/><circle cx="2" cy="8" r="1.35"/><circle cx="2" cy="13.8" r="1.35"/></g></svg>
</div>
<div class="row" style="top:551.30px">
<svg class="chv" viewBox="0 0 8 12"><path d="M1.5 1 L6.5 6 L1.5 11" fill="none" stroke="#1063c9" stroke-width="1.4" stroke-linecap="round" stroke-linejoin="round"/></svg><span class="cb"></span><span class="c nm">172.26.48.65</span><svg class="doc" viewBox="0 0 14 15"><path d="M2.2 .7 H8.4 L12.6 4.9 V13.2 a1.1 1.1 0 0 1 -1.1 1.1 H2.2 a1.1 1.1 0 0 1 -1.1 -1.1 V1.8 a1.1 1.1 0 0 1 1.1 -1.1 Z M8.2 .9 V5 H12.4 M3.6 7.4 H10.2 M3.6 9.6 H10.2 M3.6 11.8 H10.2 M3.6 5 H5.8" fill="none" stroke="#1063c9" stroke-width="1.1" stroke-linejoin="round"/></svg>
<span class="bdg r" style="left:244.3px;width:33px">8</span>
<span class="c" style="left:320px">No</span><span class="c" style="left:396.6px">02/...</span>
<span class="srcw"><span class="src" style="left:476.3px"><svg viewBox="0 0 16 16"><g fill="none" stroke="#1063c9" stroke-width="1.1" stroke-linecap="round"><path d="M10.6 1.3 A7.1 7.1 0 1 1 1 7.2"/><path d="M9.6 4 A4.2 4.2 0 1 1 3.9 7.4"/><path d="M8 8.2 L3.2 2.8"/><circle cx="4.9" cy="0.9" r=".55" fill="#1063c9" stroke="none"/></g></svg></span></span>
<span class="tagw"><span class="tagp"><svg viewBox="0 0 16.4 15.2"><g fill="none" stroke="#1063c9" stroke-width="1.1" stroke-linecap="round" stroke-linejoin="round"><path d="M4.7 12.2 L.7 7.5 L7.2 .8 H13.6 V2.8"/><path d="M15 9 A4 4 0 0 0 7.6 8.2"/><path d="M7.2 11.6 A4 4 0 0 0 14.6 12.4"/><path d="M15.6 6.4 L15.2 9.4 L12.4 8.6 Z M6.6 14.2 L7 11.2 L9.8 12 Z" fill="#1063c9" stroke-width=".6"/></g></svg></span></span>
<span class="c ip">172.26</span>
<span class="c d" style="left:702.5px">-</span><span class="c d" style="left:779px">-</span><span class="c d" style="left:855.5px">-</span><span class="c d" style="left:931.5px">-</span><span class="c d" style="left:1008px">-</span>
<span class="aesw"><span class="bdg r aes">733</span></span>
<span class="c" style="left:1161px">VM...</span><span class="c d" style="left:1236.5px">-</span><svg class="keb" viewBox="0 0 4 16"><g fill="#1063c9"><circle cx="2" cy="2.2" r="1.35"/><circle cx="2" cy="8" r="1.35"/><circle cx="2" cy="13.8" r="1.35"/></g></svg>
</div>
<div class="row" style="top:581.80px">
<svg class="chv" viewBox="0 0 8 12"><path d="M1.5 1 L6.5 6 L1.5 11" fill="none" stroke="#1063c9" stroke-width="1.4" stroke-linecap="round" stroke-linejoin="round"/></svg><span class="cb"></span><span class="c nm">ubuserv2404</span><svg class="doc" viewBox="0 0 14 15"><path d="M2.2 .7 H8.4 L12.6 4.9 V13.2 a1.1 1.1 0 0 1 -1.1 1.1 H2.2 a1.1 1.1 0 0 1 -1.1 -1.1 V1.8 a1.1 1.1 0 0 1 1.1 -1.1 Z M8.2 .9 V5 H12.4 M3.6 7.4 H10.2 M3.6 9.6 H10.2 M3.6 11.8 H10.2 M3.6 5 H5.8" fill="none" stroke="#1063c9" stroke-width="1.1" stroke-linejoin="round"/></svg>
<span class="bdg o" style="left:244.3px;width:33px">4</span>
<span class="c" style="left:320px">No</span><span class="c" style="left:396.6px">01/1...</span>
<span class="srcw"><span class="src" style="left:476.3px"><svg viewBox="0 0 16 16"><g fill="none" stroke="#1063c9" stroke-width="1.1" stroke-linecap="round"><path d="M10.6 1.3 A7.1 7.1 0 1 1 1 7.2"/><path d="M9.6 4 A4.2 4.2 0 1 1 3.9 7.4"/><path d="M8 8.2 L3.2 2.8"/><circle cx="4.9" cy="0.9" r=".55" fill="#1063c9" stroke="none"/></g></svg></span></span>
<span class="tagw"><span class="tagp"><svg viewBox="0 0 16.4 15.2"><g fill="none" stroke="#1063c9" stroke-width="1.1" stroke-linecap="round" stroke-linejoin="round"><path d="M4.7 12.2 L.7 7.5 L7.2 .8 H13.6 V2.8"/><path d="M15 9 A4 4 0 0 0 7.6 8.2"/><path d="M7.2 11.6 A4 4 0 0 0 14.6 12.4"/><path d="M15.6 6.4 L15.2 9.4 L12.4 8.6 Z M6.6 14.2 L7 11.2 L9.8 12 Z" fill="#1063c9" stroke-width=".6"/></g></svg></span></span>
<span class="c ip">172.26</span>
<span class="c d" style="left:702.5px">-</span><span class="c d" style="left:779px">-</span><span class="c d" style="left:855.5px">-</span><span class="c d" style="left:931.5px">-</span><span class="c d" style="left:1008px">-</span>
<span class="aesw"><span class="bdg o aes">487</span></span>
<span class="c" style="left:1161px">Ubu...</span><span class="c d" style="left:1236.5px">-</span><svg class="keb" viewBox="0 0 4 16"><g fill="#1063c9"><circle cx="2" cy="2.2" r="1.35"/><circle cx="2" cy="8" r="1.35"/><circle cx="2" cy="13.8" r="1.35"/></g></svg>
</div>
<div class="row" style="top:612.30px">
<svg class="chv" viewBox="0 0 8 12"><path d="M1.5 1 L6.5 6 L1.5 11" fill="none" stroke="#1063c9" stroke-width="1.4" stroke-linecap="round" stroke-linejoin="round"/></svg><span class="cb"></span><span class="c nm">172.26.90.53</span><svg class="doc" viewBox="0 0 14 15"><path d="M2.2 .7 H8.4 L12.6 4.9 V13.2 a1.1 1.1 0 0 1 -1.1 1.1 H2.2 a1.1 1.1 0 0 1 -1.1 -1.1 V1.8 a1.1 1.1 0 0 1 1.1 -1.1 Z M8.2 .9 V5 H12.4 M3.6 7.4 H10.2 M3.6 9.6 H10.2 M3.6 11.8 H10.2 M3.6 5 H5.8" fill="none" stroke="#1063c9" stroke-width="1.1" stroke-linejoin="round"/></svg>
<span class="bdg o" style="left:244.3px;width:33px">4</span>
<span class="c" style="left:320px">No</span><span class="c" style="left:396.6px">12/3...</span>
<span class="srcw"><span class="src" style="left:476.3px"><svg viewBox="0 0 16 16"><g fill="none" stroke="#1063c9" stroke-width="1.0"><circle cx="8" cy="8" r="7.2"/><path d="M3.4 2.6 C6.2 6 6.4 10.2 4.6 14.2 M9.2 1 C12.4 4.8 12.6 10.6 10 15 M1 6.2 C5.4 4.2 11 4.4 14.8 6 M1.2 10.8 C5.6 8.8 11 9 15 10.6"/></g></svg></span></span>
<span class="tagw"><span class="tagp"><svg viewBox="0 0 16.4 15.2"><g fill="none" stroke="#1063c9" stroke-width="1.1" stroke-linecap="round" stroke-linejoin="round"><path d="M4.7 12.2 L.7 7.5 L7.2 .8 H13.6 V2.8"/><path d="M15 9 A4 4 0 0 0 7.6 8.2"/><path d="M7.2 11.6 A4 4 0 0 0 14.6 12.4"/><path d="M15.6 6.4 L15.2 9.4 L12.4 8.6 Z M6.6 14.2 L7 11.2 L9.8 12 Z" fill="#1063c9" stroke-width=".6"/></g></svg></span></span>
<span class="c ip">172.26</span>
<span class="c d" style="left:702.5px">-</span><span class="c d" style="left:779px">-</span><span class="c d" style="left:855.5px">-</span><span class="c d" style="left:931.5px">-</span><span class="c d" style="left:1008px">-</span>
<span class="aesw"><span class="bdg o aes">537</span></span>
<span class="c" style="left:1161px">Linu...</span><span class="c" style="left:1236.5px">No</span><svg class="keb" viewBox="0 0 4 16"><g fill="#1063c9"><circle cx="2" cy="2.2" r="1.35"/><circle cx="2" cy="8" r="1.35"/><circle cx="2" cy="13.8" r="1.35"/></g></svg>
</div>
</div>
<svg class="abs" style="left:1362.9px;top:513.7px" width="20" height="26" viewBox="0 0 20 26"><path d="M6.2 16.2 V3 a1.95 1.95 0 0 1 3.9 0 V11.6 V7.7 a1.5 1.5 0 0 1 3 0 V11.6 V8.8 a1.45 1.45 0 0 1 2.9 0 V11.6 V9.9 a1.5 1.5 0 0 1 3 0 V17.5 C19.1 22 16 24.8 12 24.8 C8 24.8 6.5 22.5 4.6 19.8 L1.6 15.8 C.6 14.2 2.8 12.8 4.2 14.2 Z" fill="#fff" stroke="#14213d" stroke-width="1.25" stroke-linejoin="round"/></svg>
</body></html>
